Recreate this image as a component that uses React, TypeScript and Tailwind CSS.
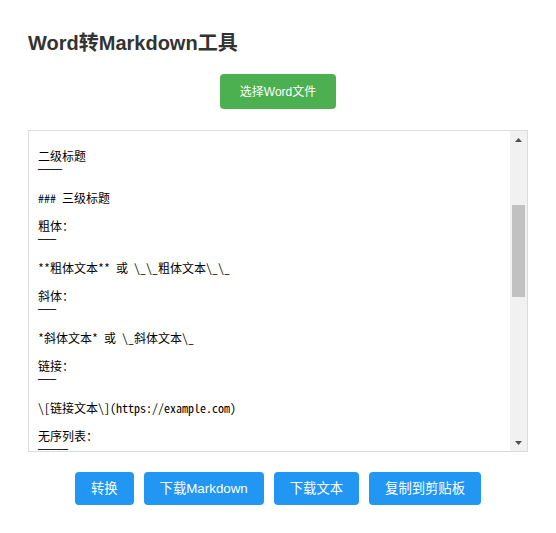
const uiFont = 'font-["Liberation_Sans","Noto_Sans_CJK_SC",sans-serif]'

const editorLines: { text: string; rule?: boolean }[] = [
  { text: '二级标题' },
  { text: '────', rule: true },
  { text: '' },
  { text: '### 三级标题' },
  { text: '' },
  { text: '粗体：' },
  { text: '───', rule: true },
  { text: '' },
  { text: '**粗体文本** 或 \\_\\_粗体文本\\_\\_' },
  { text: '' },
  { text: '斜体：' },
  { text: '───', rule: true },
  { text: '' },
  { text: '*斜体文本* 或 \\_斜体文本\\_' },
  { text: '' },
  { text: '链接：' },
  { text: '───', rule: true },
  { text: '' },
  { text: '\\[链接文本\\](https://example.com)' },
  { text: '' },
  { text: '无序列表：' },
  { text: '─────', rule: true },
]

const actions = ['转换', '下载Markdown', '下载文本', '复制到剪贴板']

function Scrollbar() {
  return (
    <div className="flex w-[17px] shrink-0 flex-col bg-[#f1f1f1]">
      <div className="flex h-[17px] items-center justify-center">
        <svg width="7" height="4" viewBox="0 0 7 4">
          <path d="M3.5 0 L7 4 L0 4 Z" fill="#505050" />
        </svg>
      </div>
      <div className="flex-1">
        <div className="mx-[2px] mt-[57px] h-[92px] bg-[#c1c1c1]" />
      </div>
      <div className="flex h-[17px] items-center justify-center">
        <svg width="7" height="4" viewBox="0 0 7 4">
          <path d="M0 0 L7 0 L3.5 4 Z" fill="#505050" />
        </svg>
      </div>
    </div>
  )
}

export default function App() {
  return (
    <main className={`min-h-screen bg-white ${uiFont}`}>
      <div className="mx-auto w-[500px] pt-[31px]">
        <h2 className="text-[20px] font-bold leading-[24px] text-[#333]">Word转Markdown工具</h2>

        <div className="mt-[19px] flex justify-center">
          <button className="h-[35px] rounded-[4px] bg-[#4caf50] px-5 text-[12px] leading-none text-white">
            选择Word文件
          </button>
        </div>

        <div className="mt-[21px] flex h-[322px] border border-[#dcdcdc] bg-white">
          <div className='flex-1 overflow-hidden pl-[9px] pt-[18px] font-["Noto_Sans_Mono_CJK_SC","Liberation_Mono","Noto_Sans_CJK_SC",monospace] text-[12px] leading-[14px] text-black'>
            {editorLines.map((line, i) =>
              line.rule ? (
                <div key={i} className='h-[14px] whitespace-pre font-["DejaVu_Sans_Mono",monospace] text-[10px] leading-[13px]'>
                  {line.text}
                </div>
              ) : (
                <div key={i} className="h-[14px] whitespace-pre">
                  {line.text}
                </div>
              ),
            )}
          </div>
          <Scrollbar />
        </div>

        <div className="mt-[20px] flex justify-center gap-[10px]">
          {actions.map((label) => (
            <button
              key={label}
              className="h-[33px] rounded-[4px] bg-[#2196f3] px-4 text-[13.33px] leading-none text-white"
            >
              {label}
            </button>
          ))}
        </div>
      </div>
    </main>
  )
}
